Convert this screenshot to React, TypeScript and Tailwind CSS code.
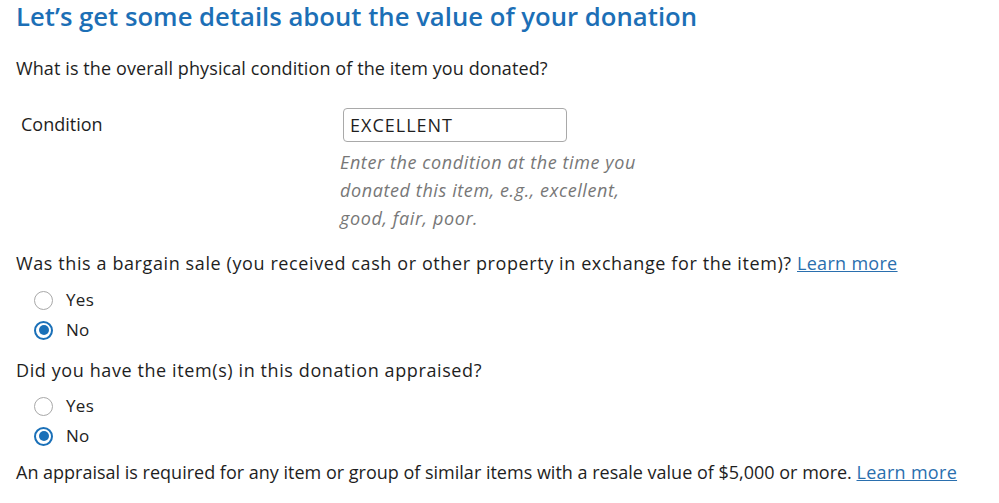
import React from "react";

function Radio({ label, checked }: { label: string; checked?: boolean }) {
  return (
    <label className="flex items-center h-[30px] pl-[18px]">
      {checked ? (
        <span className="w-[19px] h-[19px] rounded-full border-2 border-[#1a70b8] flex items-center justify-center">
          <span className="w-[10px] h-[10px] rounded-full bg-[#1a70b8]" />
        </span>
      ) : (
        <span className="w-[19px] h-[19px] rounded-full border border-[#a8a8a8]" />
      )}
      <span className="ml-[13px] text-[17px] text-[#222] tracking-[0.3px]">{label}</span>
    </label>
  );
}

export default function App() {
  return (
    <div className="w-[999px] h-[503px] bg-white overflow-hidden font-['Open_Sans',sans-serif] text-[#1e1e1e]">
      <div className="pl-[16px]">
        <h1 className="text-[25.7px] leading-[34px] font-semibold text-[#1c6fb6]">
          Let’s get some details about the value of your donation
        </h1>
        <p className="mt-[20px] text-[18px] leading-[28px] tracking-[0.1px]">
          What is the overall physical condition of the item you donated?
        </p>
        <div className="mt-[26px] flex">
          <div className="w-[327px] pl-[5px] pt-[2px] text-[18px] leading-[28px]">Condition</div>
          <div>
            <div className="w-[224px] h-[34px] border border-[#a9a9a9] rounded-[4px] px-[6px] flex items-center text-[18px] tracking-[1px]">
              EXCELLENT
            </div>
            <p className="mt-[6px] -ml-[3px] w-[340px] italic text-[18px] leading-[28px] tracking-[0.6px] text-[#777]">
              Enter the condition at the time you
              <br />
              donated this item, e.g., excellent,
              <br />
              good, fair, poor.
            </p>
          </div>
        </div>
        <p className="mt-[17px] text-[18px] leading-[28px] tracking-[0.6px] whitespace-nowrap">
          Was this a bargain sale (you received cash or other property in exchange for the item)?{" "}
          <a className="text-[#2a6fae] underline tracking-[0.3px]">Learn more</a>
        </p>
        <div className="mt-[8px]">
          <Radio label="Yes" />
          <Radio label="No" checked />
        </div>
        <p className="mt-[11px] text-[18px] leading-[28px] tracking-[0.6px]">
          Did you have the item(s) in this donation appraised?
        </p>
        <div className="mt-[7px]">
          <Radio label="Yes" />
          <Radio label="No" checked />
        </div>
        <p className="mt-[7px] text-[18px] leading-[28px] whitespace-nowrap">
          An appraisal is required for any item or group of similar items with a resale value of $5,000 or more.{" "}
          <a className="text-[#2a6fae] underline tracking-[0.3px]">Learn more</a>
        </p>
      </div>
    </div>
  );
}
